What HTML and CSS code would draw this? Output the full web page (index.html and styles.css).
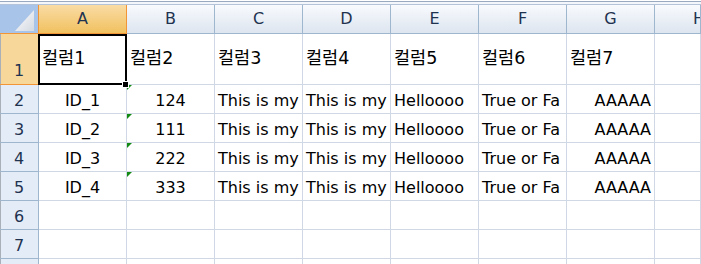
FILE: index.html
```html
<!DOCTYPE html>
<html lang="ko">
<head>
    <meta charset="UTF-8">
    <title>Sheet1</title>
    <link rel="stylesheet" href="styles.css">
</head>
<body>
    <div class="topbar"></div>
    <div class="sheet">
        <!-- column headers -->
        <div class="corner">
            <svg width="20" height="22" viewBox="0 0 20 22">
                <defs>
                    <linearGradient id="tri" x1="0" y1="0" x2="1" y2="1">
                        <stop offset="0" stop-color="#ffffff"/>
                        <stop offset="1" stop-color="#d3d9e2"/>
                    </linearGradient>
                </defs>
                <polygon points="19,0 19,21 0,21" fill="url(#tri)"/>
            </svg>
        </div>
        <div class="colhead active">A</div>
        <div class="colhead">B</div>
        <div class="colhead">C</div>
        <div class="colhead">D</div>
        <div class="colhead">E</div>
        <div class="colhead">F</div>
        <div class="colhead">G</div>
        <div class="colhead last">H</div>

        <!-- row 1 -->
        <div class="rowhead active">1</div>
        <div class="cell title">컬럼1</div>
        <div class="cell title">컬럼2</div>
        <div class="cell title">컬럼3</div>
        <div class="cell title">컬럼4</div>
        <div class="cell title">컬럼5</div>
        <div class="cell title">컬럼6</div>
        <div class="cell title">컬럼7</div>
        <div class="cell"></div>

        <!-- row 2 -->
        <div class="rowhead">2</div>
        <div class="cell center">ID_1</div>
        <div class="cell center flag">124</div>
        <div class="cell">This is my</div>
        <div class="cell">This is my</div>
        <div class="cell">Helloooo</div>
        <div class="cell">True or Fa</div>
        <div class="cell right">AAAAA</div>
        <div class="cell"></div>

        <!-- row 3 -->
        <div class="rowhead">3</div>
        <div class="cell center">ID_2</div>
        <div class="cell center flag">111</div>
        <div class="cell">This is my</div>
        <div class="cell">This is my</div>
        <div class="cell">Helloooo</div>
        <div class="cell">True or Fa</div>
        <div class="cell right">AAAAA</div>
        <div class="cell"></div>

        <!-- row 4 -->
        <div class="rowhead">4</div>
        <div class="cell center">ID_3</div>
        <div class="cell center flag">222</div>
        <div class="cell">This is my</div>
        <div class="cell">This is my</div>
        <div class="cell">Helloooo</div>
        <div class="cell">True or Fa</div>
        <div class="cell right">AAAAA</div>
        <div class="cell"></div>

        <!-- row 5 -->
        <div class="rowhead">5</div>
        <div class="cell center">ID_4</div>
        <div class="cell center flag">333</div>
        <div class="cell">This is my</div>
        <div class="cell">This is my</div>
        <div class="cell">Helloooo</div>
        <div class="cell">True or Fa</div>
        <div class="cell right">AAAAA</div>
        <div class="cell"></div>

        <!-- empty rows -->
        <div class="rowhead">6</div>
        <div class="cell"></div><div class="cell"></div><div class="cell"></div><div class="cell"></div>
        <div class="cell"></div><div class="cell"></div><div class="cell"></div><div class="cell"></div>

        <div class="rowhead">7</div>
        <div class="cell"></div><div class="cell"></div><div class="cell"></div><div class="cell"></div>
        <div class="cell"></div><div class="cell"></div><div class="cell"></div><div class="cell"></div>

        <div class="rowhead"></div>
        <div class="cell"></div><div class="cell"></div><div class="cell"></div><div class="cell"></div>
        <div class="cell"></div><div class="cell"></div><div class="cell"></div><div class="cell"></div>

        <!-- active cell A1 -->
        <div class="selection"><span class="handle"></span></div>
    </div>
</body>
</html>
```

FILE: styles.css
```css
body {
    margin: 0;
    background-color: #ffffff;
    font-family: "DejaVu Sans", "Noto Sans CJK KR", sans-serif;
    font-size: 16px;
    color: #000;
    overflow: hidden;
}
.topbar {
    height: 5px;
    background: linear-gradient(to bottom, #ffffff 0 1px, #98a9c0 1px 2px, #f3f6fa 2px 4px, #b4c3d7 4px 5px);
}
.sheet {
    position: relative;
    display: grid;
    grid-template-columns: 39px repeat(7, 88px) 1fr;
    grid-template-rows: 29px 51px repeat(7, 29px);
}
.sheet > div {
    box-sizing: border-box;
    border-right: 1px solid #d0d7e5;
    border-bottom: 1px solid #d0d7e5;
    white-space: nowrap;
    overflow: hidden;
}
.corner {
    background-color: #a9c4e9;
    border-right-color: #f29536 !important;
    border-bottom-color: #f29536 !important;
    display: flex;
    align-items: flex-end;
    justify-content: flex-end;
    padding: 0 3px 1px 0;
}
.corner svg {
    display: block;
}
.colhead {
    background: linear-gradient(to bottom, #f8fafd, #dde5ef);
    border-right-color: #9eb6ce !important;
    border-bottom-color: #9eb6ce !important;
    color: #1f3350;
    font-size: 16px;
    line-height: 28px;
    text-align: center;
}
.colhead.active {
    background: linear-gradient(to bottom, #f9dca5, #f1c15f);
    border-right-color: #f29536 !important;
    border-bottom-color: #f29536 !important;
}
.colhead.last {
    text-align: left;
    padding-left: 38px;
}
.rowhead {
    background-color: #e4ecf7;
    border-right-color: #9eb6ce !important;
    border-bottom-color: #9eb6ce !important;
    box-shadow: inset 1px 0 0 #a9b0b8;
    color: #1f3350;
    display: flex;
    align-items: flex-end;
    justify-content: center;
    line-height: 18px;
    padding-bottom: 3px;
}
.rowhead.active {
    background-color: #f8d79b;
    border-bottom-color: #f29536 !important;
    border-right-color: #f29536 !important;
    padding-bottom: 4px;
}
.cell {
    position: relative;
    display: flex;
    align-items: flex-end;
    line-height: 18px;
    padding: 0 3px 3px 3px;
}
.cell.title {
    align-items: center;
    font-size: 17.5px;
    padding-bottom: 2px;
}
.cell.center {
    justify-content: center;
}
.cell.right {
    justify-content: flex-end;
}
.cell.flag::before {
    content: "";
    position: absolute;
    top: 0;
    left: 0;
    border-top: 5px solid #138a13;
    border-right: 5px solid transparent;
}
.selection {
    position: absolute;
    left: 38px;
    top: 29px;
    width: 89px;
    height: 51px;
    box-sizing: border-box;
    border: 2px solid #000 !important;
    overflow: visible !important;
    pointer-events: none;
}
.handle {
    position: absolute;
    right: -3px;
    bottom: -4px;
    width: 5px;
    height: 5px;
    background-color: #000;
    outline: 1px solid #fff;
}
```
